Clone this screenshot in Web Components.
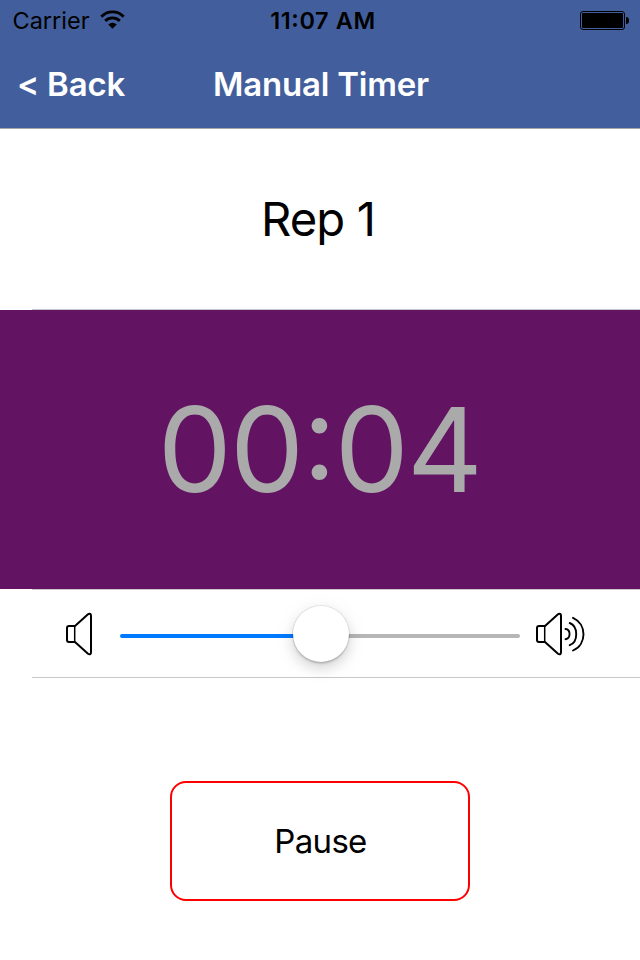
<!DOCTYPE html>
<html lang="en">
<head>
<meta charset="utf-8">
<title>Manual Timer</title>
<style>
html, body { margin: 0; height: 100%; background: #fff; }
body { font-family: Inter, "Liberation Sans", sans-serif; color: #000; overflow: hidden; font-feature-settings: "calt" 1; }
</style>
</head>
<body>
<timer-screen></timer-screen>
<script>
const define = (name, html) => {
  const template = document.createElement('template');
  template.innerHTML = html;
  customElements.define(name, class extends HTMLElement {
    constructor() {
      super();
      this.attachShadow({ mode: 'open' }).append(template.content.cloneNode(true));
    }
  });
};

define('status-bar', `
<style>
:host { display: grid; grid-template-columns: 1fr auto 1fr; height: 42px; line-height: 42px; font-size: 23.5px; }
.left { display: flex; align-items: center; padding-left: 12.5px; }
.left svg { margin-left: 10px; margin-top: -2px; }
.time { font-weight: 560; letter-spacing: .6px; padding-left: 6px; }
.right { display: flex; align-items: center; justify-content: flex-end; padding-right: 10px; }
.right svg { margin-top: -2px; }
svg { display: block; }
</style>
<div class="left"><span>Carrier</span>
<svg width="25" height="20" viewBox="0 0 26 20" fill="none" stroke="#000"><path stroke-width="3" d="M1.4 6.5a16.2 16.2 0 0 1 23.2 0M5.4 10.9a10.7 10.7 0 0 1 15.2 0"/><path fill="#000" stroke="none" d="M8.6 14.8a6.2 6.2 0 0 1 8.8 0L13 19.2z"/></svg></div>
<div class="time">11:07 AM</div>
<div class="right"><svg width="50" height="20" viewBox="0 0 50 20"><rect x=".5" y="1.5" width="44" height="18" rx="2.5" fill="none" stroke="#000"/><rect x="2" y="3" width="41" height="15" rx="1" fill="#000"/><path d="M46 7c2 0 3 1 3 3.5S48 14 46 14z"/></svg></div>
`);

define('nav-bar', `
<style>
:host { display: grid; grid-template-columns: 1fr auto 1fr; height: 86px; line-height: 84px; color: #fff; font-size: 33px; font-weight: 560; letter-spacing: -.2px; font-feature-settings: "calt" 0; box-sizing: border-box; }
.back { padding-left: 17px; }
.title { padding-left: 2px; }
</style>
<div class="back"><slot name="back"></slot></div><div class="title"><slot></slot></div>
`);

define('table-cell', `
<style>
:host { display: flex; flex-direction: column; background: var(--cell-bg, #fff); }
.content { flex: 1; display: flex; align-items: center; justify-content: center; }
.rule { height: 1px; background: linear-gradient(90deg, #fff 32px, #c8c7cc 32px); }
</style>
<div class="content"><slot></slot></div><div class="rule"></div>
`);

define('speaker-icon', `
<style>
:host { display: block; width: 52px; height: 44px; }
svg { display: block; }
.waves { display: none; }
:host([loud]) .waves { display: inline; }
</style>
<svg width="52" height="44" viewBox="0 0 52 44" fill="none" stroke="#000" stroke-width="2" stroke-linecap="round" stroke-linejoin="round">
<path d="M10 14H4Q2 14 2 16V28Q2 30 4 30H10L23 41.7Q24.2 42.6 25.4 42Q26 41.5 26 40V4Q26 2.5 25.4 2Q24.2 1.4 23 2.3L10 14"/><path stroke-width="1.5" d="M9.7 14.5V29.5"/>
<g class="waves" stroke-width="1.9"><path d="M30.5 17C35.9 17.5 35.9 26.5 30.5 27.2M34.7 11C43.4 14.5 43.4 29.8 34.7 33.2M38 5.8C52 12 52 32.5 38 38.5"/></g></svg>
`);

define('volume-slider', `
<style>
:host { display: block; width: 400px; height: 4px; border-radius: 2px; background: linear-gradient(90deg, #007aff 200px, #b6b6b6 200px); position: relative; }
.thumb { position: absolute; left: 173px; top: -28px; width: 56px; height: 56px; border-radius: 50%; background: #fff; box-shadow: 0 0 0 1px rgba(0,0,0,.07), 0 6px 13px rgba(0,0,0,.14), 0 2px 2px rgba(0,0,0,.14), 0 4px 26px rgba(0,0,0,.06); }
</style>
<div class="thumb"></div>
`);

define('outline-button', `
<style>
:host { display: flex; align-items: center; justify-content: center; box-sizing: border-box; width: 300px; height: 120px; border: 2px solid #f00; border-radius: 16px; font-size: 33px; letter-spacing: -.7px; }
</style>
<slot></slot>
`);

define('timer-screen', `
<style>
:host { display: flex; flex-direction: column; width: 640px; height: 960px; background: #fff; }
header { background: #425e9c; height: 128px; border-bottom: 1px solid #a7a7aa; }
.rep { height: 181px; font-size: 47.2px; letter-spacing: -.9px; }
.rep span { padding: 0 4px 2px 0; }
.clock { height: 280px; --cell-bg: #621463; color: #aaa; font-size: 117.5px; letter-spacing: -1.7px; }
.clock span { padding: 0 1px 1px 0; }
.volume { height: 88px; }
.controls { display: flex; align-items: center; width: 100%; box-sizing: border-box; padding-left: 65px; }
.controls volume-slider { margin-left: 3px; margin-right: 15px; margin-top: 5px; }
.rep span, .clock span, outline-button span { display: block; }
.action { flex: 1; display: flex; align-items: flex-start; justify-content: center; padding-top: 103px; }
outline-button span { padding-left: 1px; }
</style>
<header><status-bar></status-bar><nav-bar><span slot="back">&lt; Back</span>Manual Timer</nav-bar></header>
<table-cell class="rep"><span>Rep 1</span></table-cell>
<table-cell class="clock"><span>00:04</span></table-cell>
<table-cell class="volume"><div class="controls"><speaker-icon></speaker-icon><volume-slider></volume-slider><speaker-icon loud></speaker-icon></div></table-cell>
<div class="action"><outline-button><span>Pause</span></outline-button></div>
`);
</script>
</body>
</html>
